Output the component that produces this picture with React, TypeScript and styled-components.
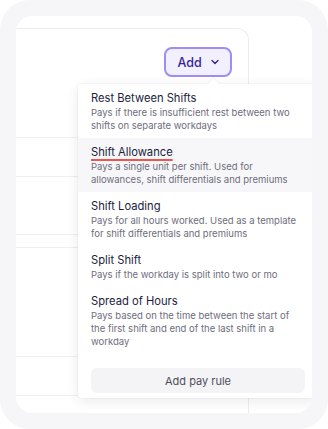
import React from "react";
import styled, { createGlobalStyle } from "styled-components";
import { ChevronDown } from "lucide-react";

const GlobalStyle = createGlobalStyle`
  html, body { margin: 0; padding: 0; background: #ffffff; }
  body { font-family: Inter, "Noto Sans", sans-serif; -webkit-font-smoothing: antialiased; }
  * { box-sizing: border-box; }
`;

const Frame = styled.div`
  width: 328px;
  height: 429px;
  background: #f6f6f8;
  border-radius: 30px;
  padding: 16px 16px 16px 16px;
`;

const Panel = styled.div`
  position: relative;
  height: 397px;
  background: #ffffff;
  border-radius: 16px;
  overflow: hidden;
  padding-top: 12px;
`;

const Card = styled.div`
  margin-left: -20px;
  width: 253px;
  border: 1px solid #ececf0;
  border-bottom: none;
  border-top-right-radius: 12px;
`;

const CardHeader = styled.div`
  height: 108px;
  display: flex;
  justify-content: flex-end;
  align-items: flex-start;
  padding: 18px 16px 0 0;
`;

const AddButton = styled.button`
  display: flex;
  align-items: center;
  justify-content: center;
  gap: 7px;
  width: 68px;
  height: 30px;
  border: 2px solid #a08cf5;
  border-radius: 8px;
  background: #f2f0fe;
  color: #34249a;
  font-family: Inter, sans-serif;
  font-size: 12.5px;
  font-weight: 500;
  padding: 0 0 0 2px;
  cursor: pointer;
`;

const Row = styled.div<{ $h: number }>`
  height: ${(p) => p.$h}px;
  border-top: 1px solid #efeff2;
`;

const Dropdown = styled.div`
  position: absolute;
  left: 62px;
  top: 68px;
  width: 240px;
  background: #ffffff;
  border-radius: 4px;
  box-shadow: 0 3px 14px rgba(24, 24, 48, 0.09), 0 0 0 1px rgba(24, 24, 48, 0.02);
  padding-bottom: 5px;
`;

const Caret = styled.div`
  position: absolute;
  left: 131px;
  top: -4px;
  width: 9px;
  height: 9px;
  background: #ffffff;
  transform: rotate(45deg);
  box-shadow: -1px -1px 1px rgba(24, 24, 48, 0.04);
`;

const Item = styled.div<{ $active?: boolean }>`
  position: relative;
  padding: 6px 13px 6px 13px;
  background: ${(p) => (p.$active ? "#f7f7f9" : "transparent")};
`;

const Title = styled.div<{ $marked?: boolean }>`
  font-size: 11.2px;
  line-height: 16px;
  font-weight: 400;
  color: #201e3c;
  text-decoration: ${(p) => (p.$marked ? "underline" : "none")};
  text-decoration-color: #f0544f;
  text-decoration-thickness: 1.5px;
  text-underline-offset: 3px;
`;

const Desc = styled.div`
  font-size: 9.5px;
  line-height: 13px;
  color: #6e6d7c;
`;

const DescLine = styled.span`
  display: block;
  white-space: nowrap;
`;

const Footer = styled.div`
  padding: 14px 13px 0 13px;
`;

const PayRuleButton = styled.button`
  width: 214px;
  height: 25px;
  border: none;
  border-radius: 6px;
  background: #f4f4f6;
  color: #4f4e5c;
  font-family: Inter, sans-serif;
  font-size: 11px;
  font-weight: 400;
`;

type Rule = { title: string; lines: string[]; active?: boolean };

const rules: Rule[] = [
  {
    title: "Rest Between Shifts",
    lines: ["Pays if there is insufficient rest between two", "shifts on separate workdays"],
  },
  {
    title: "Shift Allowance",
    lines: ["Pays a single unit per shift. Used for", "allowances, shift differentials and premiums"],
    active: true,
  },
  {
    title: "Shift Loading",
    lines: ["Pays for all hours worked. Used as a template", "for shift differentials and premiums"],
  },
  {
    title: "Split Shift",
    lines: ["Pays if the workday is split into two or mo"],
  },
  {
    title: "Spread of Hours",
    lines: [
      "Pays based on the time between the start of",
      "the first shift and end of the last shift in a",
      "workday",
    ],
  },
];

const rowHeights = [39, 58, 13, 109, 39, 40];

export default function App() {
  return (
    <>
      <GlobalStyle />
      <Frame>
        <Panel>
          <Card>
            <CardHeader>
              <AddButton>
                Add
                <ChevronDown size={12} strokeWidth={2.75} />
              </AddButton>
            </CardHeader>
            {rowHeights.map((h, i) => (
              <Row key={i} $h={h} />
            ))}
          </Card>
          <Dropdown>
            <Caret />
            {rules.map((r) => (
              <Item key={r.title} $active={r.active}>
                <Title $marked={r.active}>{r.title}</Title>
                <Desc>
                  {r.lines.map((l) => (
                    <DescLine key={l}>{l}</DescLine>
                  ))}
                </Desc>
              </Item>
            ))}
            <Footer>
              <PayRuleButton>Add pay rule</PayRuleButton>
            </Footer>
          </Dropdown>
        </Panel>
      </Frame>
    </>
  );
}
